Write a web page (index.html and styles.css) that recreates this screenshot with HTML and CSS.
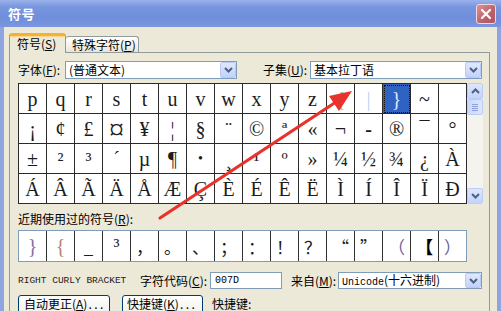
FILE: index.html
```html
<!DOCTYPE html>
<html>
<head>
<meta charset="utf-8">
<link rel="stylesheet" href="styles.css">
</head>
<body>
<div class="window">
  <div class="titlebar">
    <span class="title">符号</span>
    <span class="close"><svg width="12" height="12" viewBox="0 0 12 12"><path d="M2 2 L10 10 M10 2 L2 10" stroke="#fff" stroke-width="2.2" stroke-linecap="round"/></svg></span>
  </div>
  <div class="frame">
    <div class="body">
      <div class="tabs">
        <div class="tab active">符号(<u>S</u>)</div>
        <div class="tab other">特殊字符(<u>P</u>)</div>
      </div>
      <div class="panel">
        <div class="fontrow">
          <span class="lbl">字体(<u>F</u>):</span>
          <div class="select"><span class="val">(普通文本)</span><span class="dd"><svg width="9" height="6" viewBox="0 0 9 6"><path d="M1 1 L4.5 4.5 L8 1" fill="none" stroke="#4d6185" stroke-width="2"/></svg></span></div>
          <span class="lbl sub">子集(<u>U</u>):</span>
          <div class="select"><span class="val">基本拉丁语</span><span class="dd"><svg width="9" height="6" viewBox="0 0 9 6"><path d="M1 1 L4.5 4.5 L8 1" fill="none" stroke="#4d6185" stroke-width="2"/></svg></span></div>
        </div>
        <div class="gridwrap">
          <div class="grid">
            <span class="cell">p</span><span class="cell">q</span><span class="cell">r</span><span class="cell">s</span><span class="cell">t</span><span class="cell">u</span><span class="cell">v</span><span class="cell">w</span><span class="cell">x</span><span class="cell">y</span><span class="cell">z</span><span class="cell faint">{</span><span class="cell pale">|</span><span class="cell sel">}</span><span class="cell">~</span><span class="cell"></span>
            <span class="cell">¡</span><span class="cell">¢</span><span class="cell">£</span><span class="cell big">¤</span><span class="cell">¥</span><span class="cell">¦</span><span class="cell">§</span><span class="cell">¨</span><span class="cell">©</span><span class="cell">ª</span><span class="cell">«</span><span class="cell">¬</span><span class="cell bold">-</span><span class="cell">®</span><span class="cell">¯</span><span class="cell">°</span>
            <span class="cell">±</span><span class="cell">²</span><span class="cell">³</span><span class="cell">´</span><span class="cell">µ</span><span class="cell">¶</span><span class="cell small">•</span><span class="cell">¸</span><span class="cell">¹</span><span class="cell">º</span><span class="cell">»</span><span class="cell">¼</span><span class="cell">½</span><span class="cell">¾</span><span class="cell">¿</span><span class="cell">À</span>
            <span class="cell">Á</span><span class="cell">Â</span><span class="cell">Ã</span><span class="cell">Ä</span><span class="cell">Å</span><span class="cell">Æ</span><span class="cell">Ç</span><span class="cell">È</span><span class="cell">É</span><span class="cell">Ê</span><span class="cell">Ë</span><span class="cell">Ì</span><span class="cell">Í</span><span class="cell">Î</span><span class="cell">Ï</span><span class="cell">Ð</span>
          </div>
          <div class="scrollbar">
            <span class="sbtn"><svg width="9" height="6" viewBox="0 0 9 6"><path d="M1 5 L4.5 1.5 L8 5" fill="none" stroke="#4d6185" stroke-width="2"/></svg></span>
            <span class="thumb"><i></i><i></i><i></i><i></i></span>
            <span class="track"></span>
            <span class="sbtn"><svg width="9" height="6" viewBox="0 0 9 6"><path d="M1 1 L4.5 4.5 L8 1" fill="none" stroke="#4d6185" stroke-width="2"/></svg></span>
          </div>
        </div>
        <div class="rlabel">近期使用过的符号(<u>R</u>):</div>
        <div class="recent">
          <span class="rc serif c1">}</span><span class="rc serif c2">{</span><span class="rc">_</span><span class="rc sup">³</span><span class="rc">，</span><span class="rc">。</span><span class="rc">、</span><span class="rc">；</span><span class="rc">：</span><span class="rc">！</span><span class="rc">？</span><span class="rc">“</span><span class="rc">”</span><span class="rc c3">（</span><span class="rc heavy">【</span><span class="rc last c3">）</span>
        </div>
        <div class="inforow">
          <span class="cname">RIGHT CURLY BRACKET</span>
          <span class="clbl">字符代码(<u>C</u>):</span>
          <span class="input">007D</span>
          <span class="flbl">来自(<u>M</u>):</span>
          <div class="select from"><span class="val"><span class="mono">Unicode</span>(十六进制)</span><span class="dd"><svg width="9" height="6" viewBox="0 0 9 6"><path d="M1 1 L4.5 4.5 L8 1" fill="none" stroke="#4d6185" stroke-width="2"/></svg></span></div>
        </div>
        <div class="btnrow">
          <span class="btn b1">自动更正(<u>A</u>)<span class="dots">...</span></span>
          <span class="btn b2">快捷键(<u>K</u>)<span class="dots">...</span></span>
          <span class="sk">快捷键:</span>
        </div>
      </div>
    </div>
  </div>
  <svg class="arrow" width="501" height="311" viewBox="0 0 501 311">
    <line x1="160" y1="218" x2="336" y2="102" stroke="#e8322c" stroke-width="3.2" stroke-linecap="round"/>
    <polygon points="352,91 329,96 339,111" fill="#e8322c"/>
  </svg>
</div>
</body>
</html>
```

FILE: styles.css
```css
* { box-sizing: border-box; margin: 0; padding: 0; }
html, body { width: 501px; height: 311px; overflow: hidden; }
body {
  font-family: "Noto Sans CJK SC", "Noto Sans", sans-serif;
  font-size: 12px;
  color: #000;
  background: #ece9d8;
  position: relative;
}
u { text-decoration: underline; text-underline-offset: 1px; }

.window { display: flex; flex-direction: column; height: 311px; }

.titlebar {
  flex: none;
  height: 27px;
  display: flex;
  align-items: center;
  padding: 0 5px 0 8px;
  color: #fff;
  background: linear-gradient(#9bb2ea, #7996df 25%, #6f8edb 65%, #7a97de);
}
.title { font-weight: bold; font-size: 13px; letter-spacing: 0.5px; line-height: 1; }
.close {
  margin-left: auto;
  width: 20px;
  height: 20px;
  border: 1px solid #eed8dc;
  border-radius: 3px;
  background: linear-gradient(135deg, #dc9296, #b9616a 60%, #b05660);
  display: flex;
  align-items: center;
  justify-content: center;
}

.frame {
  flex: 1;
  display: flex;
  border-left: 4px solid #8ea5e0;
  border-right: 4px solid #8ea5e0;
  background: #ece9d8;
}
.body {
  flex: 1;
  display: flex;
  flex-direction: column;
  padding: 6px 7px 0 5px;
}

.tabs {
  display: flex;
  align-items: flex-start;
  height: 20px;
  margin-bottom: -1px;
  position: relative;
  z-index: 1;
}
.tab {
  display: flex;
  align-items: center;
  border: 1px solid #919b9c;
  border-bottom: none;
  border-radius: 3px 3px 0 0;
  line-height: 1;
  white-space: nowrap;
}
.tab.active {
  width: 57px;
  height: 20px;
  padding: 0 0 2px 7px;
  background: #ece9d8;
  border-top: 3px solid #f6b038;
  box-shadow: inset 0 1px 0 #ffd88a;
}
.tab.other {
  width: 73px;
  height: 16px;
  margin-top: 3px;
  padding-left: 6px;
  border-left: none;
  background: linear-gradient(#ffffff, #f3f2ec 60%, #e6e4da);
}

.panel {
  flex: 1;
  border: 1px solid #919b9c;
  border-bottom: none;
  background: #ece9d8;
  padding: 8px 0 0 8px;
  display: flex;
  flex-direction: column;
}

.fontrow { display: flex; align-items: center; height: 18px; }
.lbl { width: 47px; white-space: nowrap; line-height: 1; }
.lbl.sub { margin-left: 26px; }
.select {
  width: 172px;
  height: 18px;
  border: 1px solid #7f9db9;
  background: #fff;
  display: flex;
  align-items: center;
  padding-left: 3px;
}
.select .val { line-height: 1; white-space: nowrap; }
.dd {
  margin-left: auto;
  width: 16px;
  height: 16px;
  border: 1px solid #b9cbf5;
  border-radius: 2px;
  background: linear-gradient(#dfe8fd, #c1d2fb);
  display: flex;
  align-items: center;
  justify-content: center;
  flex: none;
}

.gridwrap { display: flex; margin-top: 4px; }
.grid {
  display: grid;
  grid-template-columns: repeat(16, 28px);
  grid-auto-rows: 30px;
  border-top: 1px solid #2a2a2a;
  border-left: 1px solid #2a2a2a;
}
.cell {
  border-right: 1px solid #2a2a2a;
  border-bottom: 1px solid #2a2a2a;
  background: #fff;
  display: flex;
  align-items: center;
  justify-content: center;
  font-family: "Liberation Serif", serif;
  font-size: 20px;
  line-height: 1;
  color: #1c1c1c;
}
.cell.sel {
  background: #2f62c3;
  color: #dfe8ff;
  outline: 1px dotted #111;
  outline-offset: -2px;
}
.cell.faint { color: #a0a0a0; }
.cell.pale { color: #b8d4ee; }
.cell.big { font-size: 30px; line-height: 26px; }
.cell.bold { font-weight: bold; }
.cell.small { font-size: 14px; }

.scrollbar {
  width: 16px;
  height: 121px;
  background: #f4f3ee;
  display: flex;
  flex-direction: column;
}
.sbtn {
  width: 16px;
  height: 16px;
  border: 1px solid #bccdf5;
  border-radius: 2px;
  background: linear-gradient(#dde7fd, #c3d3fb);
  display: flex;
  align-items: center;
  justify-content: center;
  flex: none;
}
.thumb {
  width: 16px;
  height: 16px;
  border: 1px solid #bccdf5;
  border-radius: 2px;
  background: linear-gradient(90deg, #cad8fb, #dce6fd);
  display: flex;
  flex-direction: column;
  align-items: center;
  justify-content: center;
  gap: 1px;
  flex: none;
}
.thumb i { display: block; width: 6px; height: 1px; background: #8ca2d8; }
.track { flex: 1; }

.rlabel { margin-top: 8px; height: 14px; line-height: 14px; white-space: nowrap; }

.recent {
  margin-top: 4px;
  width: 449px;
  height: 32px;
  border: 1px solid #7f9db9;
  background: #fff;
  display: flex;
}
.rc {
  width: 28px;
  border-right: 1px solid #333;
  display: flex;
  align-items: center;
  justify-content: center;
  font-size: 17px;
  line-height: 1;
  color: #1c1c1c;
}
.rc.last { width: 27px; border-right: none; }
.rc.serif { font-family: "Liberation Serif", serif; font-size: 20px; }
.rc.c1 { color: #7f6fa8; }
.rc.c2 { color: #b2826a; }
.rc.c3 { color: #6c5a9a; }
.rc.sup { font-family: "Liberation Serif", serif; font-size: 20px; align-items: flex-start; padding-top: 4px; }
.rc.heavy { font-weight: 900; color: #000; }

.inforow { margin-top: 10px; height: 17px; display: flex; align-items: center; white-space: nowrap; }
.cname {
  width: 122px;
  font-family: "Liberation Mono", monospace;
  font-size: 9.5px;
  color: #222;
  line-height: 1;
}
.clbl { width: 70px; line-height: 1; }
.input {
  width: 72px;
  height: 17px;
  border: 1px solid #7f9db9;
  background: #fff;
  font-family: "Liberation Mono", monospace;
  font-size: 10px;
  line-height: 15px;
  padding-left: 4px;
}
.flbl { width: 47px; margin-left: 9px; line-height: 1; }
.select.from { width: 144px; height: 17px; }
.select.from .dd { height: 15px; }
.mono { font-family: "Liberation Mono", monospace; font-size: 10px; }

.btnrow { margin-top: 6px; display: flex; align-items: flex-start; white-space: nowrap; }
.btn {
  height: 23px;
  border: 1px solid #003c74;
  border-radius: 3px;
  background: linear-gradient(#ffffff, #f4f3ee 70%, #e3e1d6);
  display: flex;
  align-items: flex-start;
  padding: 2px 0 0 5px;
  line-height: 12px;
}
.b1 { width: 92px; }
.b2 { width: 81px; margin-left: 12px; padding-left: 4px; }
.dots { letter-spacing: 2.5px; margin-left: 1px; }
.sk { margin-left: 9px; line-height: 12px; padding-top: 3px; }

.arrow { position: absolute; left: 0; top: 0; pointer-events: none; }
```
